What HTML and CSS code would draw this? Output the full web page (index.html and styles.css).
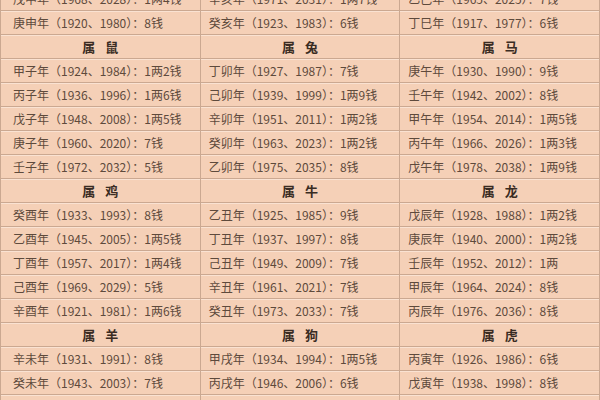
FILE: index.html
```html
<!DOCTYPE html>
<html lang="zh-CN">
<head>
<meta charset="utf-8">
<title>称骨重量表</title>
<link rel="stylesheet" href="styles.css">
</head>
<body>
<div class="sheet">
<table class="chart">
<tr><td>戊申年（1968、2028）：1两4钱</td><td>辛亥年（1971、2031）：1两7钱</td><td>乙巳年（1965、2025）：7钱</td></tr>
<tr><td>庚申年（1920、1980）：8钱</td><td>癸亥年（1923、1983）：6钱</td><td>丁巳年（1917、1977）：6钱</td></tr>
<tr class="head"><th>属鼠</th><th>属兔</th><th>属马</th></tr>
<tr><td>甲子年（1924、1984）：1两2钱</td><td>丁卯年（1927、1987）：7钱</td><td>庚午年（1930、1990）：9钱</td></tr>
<tr><td>丙子年（1936、1996）：1两6钱</td><td>己卯年（1939、1999）：1两9钱</td><td>壬午年（1942、2002）：8钱</td></tr>
<tr><td>戊子年（1948、2008）：1两5钱</td><td>辛卯年（1951、2011）：1两2钱</td><td>甲午年（1954、2014）：1两5钱</td></tr>
<tr><td>庚子年（1960、2020）：7钱</td><td>癸卯年（1963、2023）：1两2钱</td><td>丙午年（1966、2026）：1两3钱</td></tr>
<tr><td>壬子年（1972、2032）：5钱</td><td>乙卯年（1975、2035）：8钱</td><td>戊午年（1978、2038）：1两9钱</td></tr>
<tr class="head"><th>属鸡</th><th>属牛</th><th>属龙</th></tr>
<tr><td>癸酉年（1933、1993）：8钱</td><td>乙丑年（1925、1985）：9钱</td><td>戊辰年（1928、1988）：1两2钱</td></tr>
<tr><td>乙酉年（1945、2005）：1两5钱</td><td>丁丑年（1937、1997）：8钱</td><td>庚辰年（1940、2000）：1两2钱</td></tr>
<tr><td>丁酉年（1957、2017）：1两4钱</td><td>己丑年（1949、2009）：7钱</td><td>壬辰年（1952、2012）：1两</td></tr>
<tr><td>己酉年（1969、2029）：5钱</td><td>辛丑年（1961、2021）：7钱</td><td>甲辰年（1964、2024）：8钱</td></tr>
<tr><td>辛酉年（1921、1981）：1两6钱</td><td>癸丑年（1973、2033）：7钱</td><td>丙辰年（1976、2036）：8钱</td></tr>
<tr class="head"><th>属羊</th><th>属狗</th><th>属虎</th></tr>
<tr><td>辛未年（1931、1991）：8钱</td><td>甲戌年（1934、1994）：1两5钱</td><td>丙寅年（1926、1986）：6钱</td></tr>
<tr><td>癸未年（1943、2003）：7钱</td><td>丙戌年（1946、2006）：6钱</td><td>戊寅年（1938、1998）：8钱</td></tr>
<tr><td>乙未年（1955、2015）：6钱</td><td>戊戌年（1958、2018）：1两4钱</td><td>庚寅年（1950、2010）：9钱</td></tr>
</table>
</div>
</body>
</html>
```
FILE: styles.css
```css
html, body {
  margin: 0;
  padding: 0;
  background: #f5d0b7;
}
.sheet {
  width: 600px;
  height: 400px;
  overflow: hidden;
}
.chart {
  margin-top: -14px;
  width: 600px;
  border-collapse: collapse;
  table-layout: fixed;
  font-family: "Noto Sans CJK SC", "Noto Sans", sans-serif;
  font-size: 12px;
  color: #5e4a3c;
  background: #f5d0b7;
}
.chart td, .chart th {
  height: 23px;
  padding: 0 0 0 8px;
  border: 1px solid #cba891;
  box-shadow: inset 0 1px 0 #fae2d2;
  white-space: nowrap;
  line-height: 23px;
  text-align: left;
}
.chart td:first-child {
  padding-left: 12px;
}
.chart th {
  padding: 0 0 0 10px;
  text-align: center;
  font-weight: bold;
  font-size: 13px;
  color: #3a2c23;
  letter-spacing: 10px;
}
```
